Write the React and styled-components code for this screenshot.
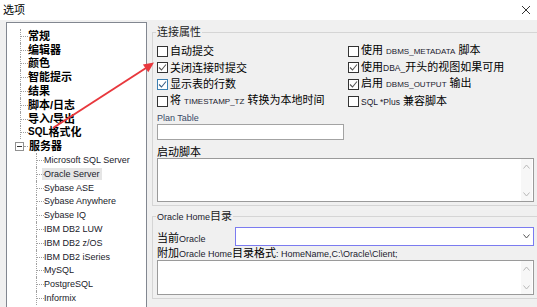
import React from 'react'
import styled, { createGlobalStyle } from 'styled-components'

const sans = `"Liberation Sans", "Noto Sans CJK SC", sans-serif`

const GlobalStyle = createGlobalStyle`
  html, body {
    margin: 0;
    padding: 0;
    background: #f0f0f0;
    overflow: hidden;
  }
  body {
    font-family: ${sans};
    font-size: 11px;
    color: #000;
  }
`

const Window = styled.div`
  position: relative;
  width: 537px;
  height: 307px;
  overflow: hidden;
  background: #f0f0f0;
  display: flex;
  flex-direction: column;
`

const TitleBar = styled.div`
  height: 20px;
  flex: none;
  background: #fff;
  display: flex;
  align-items: center;
  justify-content: space-between;
  padding: 0 6px 1px 3px;
  box-sizing: border-box;
  font-size: 11px;
  line-height: 12px;
`

const Body = styled.div`
  display: flex;
  flex: 1;
  min-height: 0;
  padding: 2px 0 0 6px;
  gap: 5px;
`

const Tree = styled.div`
  flex: none;
  width: 141px;
  height: 300px;
  box-sizing: border-box;
  border: 1px solid #828790;
  background: #fff;
  padding-top: 6px;
`

const Row = styled.div`
  height: 13.8px;
  display: flex;
  align-items: stretch;
  padding-left: ${p => p.$indent}px;
  white-space: nowrap;
`

const Branch = styled.span`
  position: relative;
  flex: none;
  width: 8px;
  border-left: 1px dotted #a0a0a0;
  box-sizing: border-box;

  &::after {
    content: '';
    position: absolute;
    left: 0;
    top: 50%;
    width: 7px;
    border-top: 1px dotted #a0a0a0;
  }
`

const ExpanderCell = styled.span`
  flex: none;
  width: 14px;
  display: flex;
  align-items: center;
`

const Expander = styled.span`
  width: 9px;
  height: 9px;
  box-sizing: border-box;
  border: 1px solid #919191;
  background: #fff;
  display: grid;
  place-items: center;

  &::before {
    content: '';
    width: 5px;
    border-top: 1px solid #333;
  }
`

const Dots = styled.span`
  width: 4px;
  border-top: 1px dotted #a0a0a0;
`

const TreeText = styled.span`
  display: flex;
  align-items: center;
  line-height: 12px;
  font-size: ${p => (p.$small ? '9px' : '11px')};
  font-weight: ${p => (p.$small ? 400 : 700)};
  color: ${p => (p.$small ? '#1a1a2a' : '#000')};
  background: ${p => (p.$selected ? '#e5e5e5' : 'transparent')};
  padding: 0 2px;
  margin-left: -2px;
  align-self: center;
  height: 12px;
`

const Lat = styled.span`
  font-family: "Liberation Sans", sans-serif;
  font-size: ${p => p.$size || 9}px;
  color: #1a1a2e;
`

const Main = styled.div`
  flex: none;
  width: 387px;
  display: flex;
  flex-direction: column;
  padding-top: 4px;
`

const Group = styled.fieldset`
  margin: ${p => p.$gap || 0}px 0 0;
  padding: 0 4px 3px;
  border: 1px solid #d5d5d5;
  min-width: 0;
`

const Legend = styled.legend`
  padding: 0 1px;
  margin-left: -1px;
  line-height: 12px;
  font-size: 11px;
  color: #222;
`

const CheckGrid = styled.div`
  display: grid;
  grid-template-columns: 191px 1fr;
  grid-auto-rows: 16.6px;
  margin-top: 5px;
`

const Check = styled.label`
  display: flex;
  align-items: center;
  gap: 2px;
  line-height: 12px;
  white-space: nowrap;
`

const Box = styled.span`
  flex: none;
  width: 11px;
  height: 11px;
  box-sizing: border-box;
  border: 1px solid ${p => (p.$hot ? '#3c7fb1' : '#333')};
  background: #fff;
  display: grid;
  place-items: center;
`

const FieldLabel = styled.div`
  margin-top: ${p => p.$gap}px;
  line-height: ${p => p.$lh || 11}px;
  white-space: nowrap;
`

const TextInput = styled.div`
  width: 187px;
  height: 16px;
  box-sizing: border-box;
  border: 1px solid #a3a3a3;
  background: #fff;
`

const TextArea = styled.div`
  height: ${p => p.$h}px;
  box-sizing: border-box;
  border: 1px solid #9a9a9a;
  background: #fff;
  display: flex;
  justify-content: flex-end;
`

const ScrollStrip = styled.div`
  width: 11px;
  margin-right: 1px;
  background: #f7f7f7;
  display: flex;
  flex-direction: column;
  justify-content: space-between;
  align-items: center;
  padding: 5px 0 4px;
`

const ComboRow = styled.div`
  display: flex;
  align-items: center;
  margin-top: 4px;
`

const ComboLabel = styled.span`
  width: 78px;
  flex: none;
  padding-top: 3px;
  line-height: 12px;
  white-space: nowrap;
`

const Combo = styled.div`
  flex: 1;
  height: 19px;
  box-sizing: border-box;
  border: 1px solid #7b7bf0;
  background: #fff;
  display: flex;
  align-items: center;
  justify-content: flex-end;
  padding-right: 3px;
`

const Overlay = styled.svg`
  position: absolute;
  left: 0;
  top: 0;
  pointer-events: none;
`

const Chevron = ({ up, color = '#b8b8b8', w = 7 }) => (
  <svg width={w} height="5" viewBox="0 0 7 5">
    <polyline
      points={up ? '0.5,4.5 3.5,1 6.5,4.5' : '0.5,0.5 3.5,4 6.5,0.5'}
      fill="none"
      stroke={color}
      strokeWidth="1"
    />
  </svg>
)

const CheckBox = ({ checked, hot, children }) => (
  <Check>
    <Box $hot={hot}>
      {checked && (
        <svg width="9" height="9" viewBox="0 0 9 9">
          <polyline points="1,4.5 3.5,7 8,1.5" fill="none" stroke={hot ? '#3a5f86' : '#555'} strokeWidth="1.1" />
        </svg>
      )}
    </Box>
    <span>{children}</span>
  </Check>
)

const topItems = ['常规', '编辑器', '颜色', '智能提示', '结果', '脚本/日志', '导入/导出']

const servers = [
  'Microsoft SQL Server',
  'Oracle Server',
  'Sybase ASE',
  'Sybase Anywhere',
  'Sybase IQ',
  'IBM DB2 LUW',
  'IBM DB2 z/OS',
  'IBM DB2 iSeries',
  'MySQL',
  'PostgreSQL',
  'Informix',
]

export default function App() {
  return (
    <Window>
      <GlobalStyle />
      <TitleBar>
        <span>选项</span>
        <svg width="10" height="10" viewBox="0 0 10 10">
          <path d="M1 1 L9 9 M9 1 L1 9" stroke="#333" strokeWidth="1" />
        </svg>
      </TitleBar>

      <Body>
        <Tree>
          {topItems.map(item => (
            <Row key={item} $indent={13}>
              <Branch />
              <TreeText>{item}</TreeText>
            </Row>
          ))}
          <Row $indent={13}>
            <Branch />
            <TreeText><Lat $size={10} style={{ color: '#000' }}>SQL</Lat>格式化</TreeText>
          </Row>
          <Row $indent={8}>
            <ExpanderCell>
              <Expander />
              <Dots />
            </ExpanderCell>
            <TreeText>服务器</TreeText>
          </Row>
          {servers.map(s => (
            <Row key={s} $indent={29}>
              <Branch />
              <TreeText $small $selected={s === 'Oracle Server'}>{s}</TreeText>
            </Row>
          ))}
        </Tree>

        <Main>
          <Group>
            <Legend>连接属性</Legend>
            <CheckGrid>
              <CheckBox>自动提交</CheckBox>
              <CheckBox>使用 <Lat $size={8}>DBMS_METADATA</Lat> 脚本</CheckBox>
              <CheckBox checked>关闭连接时提交</CheckBox>
              <CheckBox checked>使用<Lat $size={8.5}>DBA_</Lat>开头的视图如果可用</CheckBox>
              <CheckBox checked hot>显示表的行数</CheckBox>
              <CheckBox checked>启用 <Lat $size={8}>DBMS_OUTPUT</Lat> 输出</CheckBox>
              <CheckBox>将 <Lat $size={8}>TIMESTAMP_TZ</Lat> 转换为本地时间</CheckBox>
              <CheckBox><Lat $size={8.5}>SQL *Plus</Lat> 兼容脚本</CheckBox>
            </CheckGrid>
            <FieldLabel $gap={3}><Lat style={{ color: '#3a4a66' }}>Plan Table</Lat></FieldLabel>
            <TextInput />
            <FieldLabel $gap={6} $lh={12}>启动脚本</FieldLabel>
            <TextArea $h={44}>
              <ScrollStrip>
                <Chevron up />
                <Chevron />
              </ScrollStrip>
            </TextArea>
          </Group>

          <Group $gap={4}>
            <Legend><Lat>Oracle Home</Lat>目录</Legend>
            <ComboRow>
              <ComboLabel>当前<Lat>Oracle</Lat></ComboLabel>
              <Combo>
                <Chevron color="#555" />
              </Combo>
            </ComboRow>
            <FieldLabel $gap={2}>
              附加<Lat>Oracle Home</Lat>目录格式<Lat>{': HomeName,C:\\Oracle\\Client;'}</Lat>
            </FieldLabel>
            <TextArea $h={35}>
              <ScrollStrip>
                <Chevron up />
                <Chevron />
              </ScrollStrip>
            </TextArea>
          </Group>
        </Main>
      </Body>

      <Overlay width="537" height="307" viewBox="0 0 537 307">
        <line x1="53" y1="128" x2="146" y2="68" stroke="#e8383d" strokeWidth="2" />
        <polygon points="154,62.5 148.3,72.3 142.9,64.4" fill="#e8383d" />
      </Overlay>
    </Window>
  )
}
